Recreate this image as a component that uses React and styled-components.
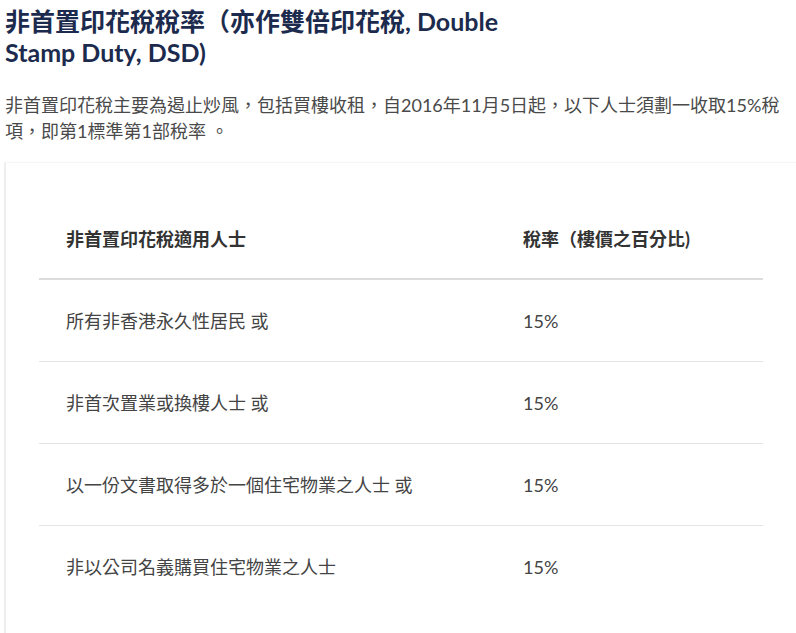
import React from 'react';
import styled, { createGlobalStyle } from 'styled-components';

const GlobalStyle = createGlobalStyle`
  html, body {
    margin: 0;
    padding: 0;
    background: #fff;
  }
  body {
    font-family: Lato, "Noto Sans CJK TC", sans-serif;
    overflow: hidden;
  }
`;

const Page = styled.div`
  padding: 6px 0 0 5px;
`;

const Title = styled.h2`
  margin: 0;
  max-width: 520px;
  font-size: 25px;
  line-height: 31px;
  font-weight: 700;
  color: #1c2b4d;
`;

const Intro = styled.p`
  margin: 24px 0 0;
  font-size: 18px;
  line-height: 26px;
  color: #4a4a4a;
`;

const Card = styled.div`
  box-sizing: border-box;
  margin: 18px 0 0 -1px;
  padding: 36px 0 0 33px;
  height: 471px;
  background: #fff;
  border-top: 1px solid #f6f6f6;
  border-left: 2px solid #eeeeee;
`;

const Table = styled.table`
  width: 724px;
  table-layout: fixed;
  border-collapse: collapse;
`;

const HeadCell = styled.th`
  box-sizing: border-box;
  text-align: left;
  padding: 29px 27px 28px;
  font-size: 18px;
  line-height: 22px;
  font-weight: 700;
  color: #333;
  border-bottom: 2px solid #dcdcdc;
  width: ${p => p.$width || 'auto'};
`;

const Cell = styled.td`
  padding: 30px 27px 29px;
  font-size: 18px;
  line-height: 22px;
  color: #444;
`;

const Row = styled.tr`
  & + & td {
    border-top: 1px solid #e4e4e4;
  }
`;

const rows = [
  ['所有非香港永久性居民 或', '15%'],
  ['非首次置業或換樓人士 或', '15%'],
  ['以一份文書取得多於一個住宅物業之人士 或', '15%'],
  ['非以公司名義購買住宅物業之人士', '15%'],
];

export default function App() {
  return (
    <Page>
      <GlobalStyle />
      <Title>非首置印花稅稅率（亦作雙倍印花稅, Double Stamp Duty, DSD)</Title>
      <Intro>
        非首置印花稅主要為遏止炒風，包括買樓收租，自2016年11月5日起，以下人士須劃一收取15%稅項，即第1標準第1部稅率 。
      </Intro>
      <Card>
        <Table>
          <thead>
            <tr>
              <HeadCell $width="457px">非首置印花稅適用人士</HeadCell>
              <HeadCell>稅率（樓價之百分比)</HeadCell>
            </tr>
          </thead>
          <tbody>
            {rows.map(([who, rate]) => (
              <Row key={who}>
                <Cell>{who}</Cell>
                <Cell>{rate}</Cell>
              </Row>
            ))}
          </tbody>
        </Table>
      </Card>
    </Page>
  );
}
